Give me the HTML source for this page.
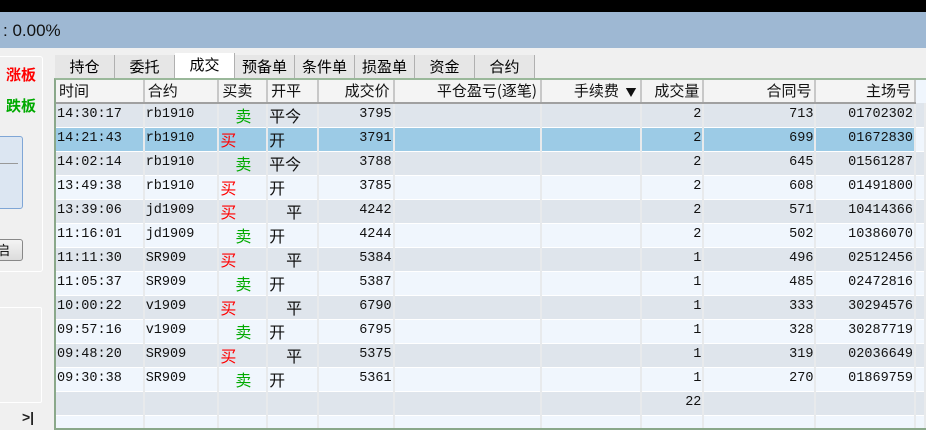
<!DOCTYPE html>
<html><head><meta charset="utf-8"><style>
*{margin:0;padding:0;box-sizing:border-box}
body{width:926px;height:430px;overflow:hidden;background:#f0f0f0;position:relative;font-family:"Liberation Sans","Noto Sans CJK SC",sans-serif}
.abs{position:absolute}
#top{left:0;top:0;width:926px;height:12px;background:#000}
#bar{left:0;top:12px;width:926px;height:36px;background:#9eb8d3;font-size:17px;line-height:38px;padding-left:3px;color:#111}
.tab{position:absolute;top:55px;height:23px;font-size:15px;line-height:24px;text-align:center;background:#e6e6e6;border-right:1px solid #b0b0b0;font-family:"Noto Sans CJK SC",sans-serif}
.tab.sel{background:#fff;top:53px;height:25px}
#grid{left:54px;top:78px;width:872px;height:352px;border-left:2px solid #8aa88a;border-top:2px solid #9ab89a;border-bottom:2px solid #8aa88a;background:#f0f6fd;overflow:hidden}
table{border-collapse:collapse;table-layout:fixed;position:absolute;left:0;top:0}
td{height:24px;line-height:22px;vertical-align:middle;border-right:2px solid #e8eaec;border-bottom:1px solid #fff;font-family:"Liberation Mono","Noto Sans CJK SC",monospace;font-size:13.5px;white-space:nowrap;overflow:hidden;padding:0 1px;color:#111}
th{height:23px;line-height:18px;font-weight:normal;font-size:15px;background:#f4f4f4;border-right:2px solid #c8c8c8;border-bottom:2px solid #a0a0a0;padding:0 3px;white-space:nowrap;color:#111;font-family:"Noto Sans CJK SC",sans-serif}
tr.o td{background:#dfe5ec}
tr.e td{background:#f0f6fd}
tr.s td{background:#9ccbe6}
.r{text-align:right}
.b{color:#f00;font-family:"Noto Sans CJK SC",sans-serif;font-size:16px}
.m{color:#0a0;font-family:"Noto Sans CJK SC",sans-serif;font-size:16px;padding-left:16px}
.k{font-family:"Noto Sans CJK SC",sans-serif;font-size:16px}
.k2{font-family:"Noto Sans CJK SC",sans-serif;font-size:16px;padding-left:18px}
</style></head><body>
<div id="top" class="abs"></div>
<div id="bar" class="abs">: 0.00%</div>
<div class="abs" style="left:-4px;top:56px;width:47px;height:216px;border:1px solid #fff;border-radius:3px"></div>
<div class="abs" style="left:6px;top:64px;font-size:15px;color:#f00;font-weight:bold;font-family:'Noto Sans CJK SC',sans-serif">涨板</div>
<div class="abs" style="left:6px;top:95px;font-size:15px;color:#0a0;font-weight:bold;font-family:'Noto Sans CJK SC',sans-serif">跌板</div>
<div class="abs" style="left:-4px;top:136px;width:27px;height:73px;border:1px solid #7fa6d6;border-radius:3px;background:#dce6f2"></div>
<div class="abs" style="left:0;top:163px;width:18px;height:1px;background:#999"></div>
<div class="abs" style="left:-4px;top:239px;width:27px;height:22px;border:1px solid #888;border-radius:3px;background:linear-gradient(#f4f4f4,#dcdcdc);font-size:13px;line-height:20px;font-family:'Noto Sans CJK SC',sans-serif">启</div>
<div class="abs" style="left:-4px;top:307px;width:46px;height:96px;border:1px solid #fff;border-radius:2px"></div>
<div class="abs" style="left:22px;top:409px;font-size:14px;font-weight:bold;color:#222">&gt;|</div>
<div class="tab" style="left:55px;width:60px">持仓</div>
<div class="tab" style="left:115px;width:60px">委托</div>
<div class="tab sel" style="left:175px;width:60px">成交</div>
<div class="tab" style="left:235px;width:60px">预备单</div>
<div class="tab" style="left:295px;width:60px">条件单</div>
<div class="tab" style="left:355px;width:60px">损盈单</div>
<div class="tab" style="left:415px;width:60px">资金</div>
<div class="tab" style="left:475px;width:60px">合约</div>
<div id="grid" class="abs">
<table>
<colgroup><col style="width:88px"><col style="width:75px"><col style="width:49px"><col style="width:51px"><col style="width:76px"><col style="width:148px"><col style="width:100px"><col style="width:63px"><col style="width:113px"><col style="width:100px"><col style="width:10px"></colgroup>
<tr><th style="text-align:left">时间</th><th style="text-align:left">合约</th><th style="text-align:left">买卖</th><th style="text-align:left">开平</th><th class="r">成交价</th><th class="r">平仓盈亏(逐笔)</th><th class="r">手续费 &nbsp;<span style="font-size:11px">▼</span></th><th class="r">成交量</th><th class="r">合同号</th><th class="r">主场号</th><th style="background:#f0f6fd;border:0"></th></tr>
<tr class="o"><td>14:30:17</td><td>rb1910</td><td class="m">卖</td><td class="k">平今</td><td class="r">3795</td><td></td><td></td><td class="r">2</td><td class="r">713</td><td class="r">01702302</td><td></td></tr>
<tr class="s"><td>14:21:43</td><td>rb1910</td><td class="b">买</td><td class="k">开</td><td class="r">3791</td><td></td><td></td><td class="r">2</td><td class="r">699</td><td class="r">01672830</td><td style="background:#f0f6fd"></td></tr>
<tr class="o"><td>14:02:14</td><td>rb1910</td><td class="m">卖</td><td class="k">平今</td><td class="r">3788</td><td></td><td></td><td class="r">2</td><td class="r">645</td><td class="r">01561287</td><td></td></tr>
<tr class="e"><td>13:49:38</td><td>rb1910</td><td class="b">买</td><td class="k">开</td><td class="r">3785</td><td></td><td></td><td class="r">2</td><td class="r">608</td><td class="r">01491800</td><td></td></tr>
<tr class="o"><td>13:39:06</td><td>jd1909</td><td class="b">买</td><td class="k2">平</td><td class="r">4242</td><td></td><td></td><td class="r">2</td><td class="r">571</td><td class="r">10414366</td><td></td></tr>
<tr class="e"><td>11:16:01</td><td>jd1909</td><td class="m">卖</td><td class="k">开</td><td class="r">4244</td><td></td><td></td><td class="r">2</td><td class="r">502</td><td class="r">10386070</td><td></td></tr>
<tr class="o"><td>11:11:30</td><td>SR909</td><td class="b">买</td><td class="k2">平</td><td class="r">5384</td><td></td><td></td><td class="r">1</td><td class="r">496</td><td class="r">02512456</td><td></td></tr>
<tr class="e"><td>11:05:37</td><td>SR909</td><td class="m">卖</td><td class="k">开</td><td class="r">5387</td><td></td><td></td><td class="r">1</td><td class="r">485</td><td class="r">02472816</td><td></td></tr>
<tr class="o"><td>10:00:22</td><td>v1909</td><td class="b">买</td><td class="k2">平</td><td class="r">6790</td><td></td><td></td><td class="r">1</td><td class="r">333</td><td class="r">30294576</td><td></td></tr>
<tr class="e"><td>09:57:16</td><td>v1909</td><td class="m">卖</td><td class="k">开</td><td class="r">6795</td><td></td><td></td><td class="r">1</td><td class="r">328</td><td class="r">30287719</td><td></td></tr>
<tr class="o"><td>09:48:20</td><td>SR909</td><td class="b">买</td><td class="k2">平</td><td class="r">5375</td><td></td><td></td><td class="r">1</td><td class="r">319</td><td class="r">02036649</td><td></td></tr>
<tr class="e"><td>09:30:38</td><td>SR909</td><td class="m">卖</td><td class="k">开</td><td class="r">5361</td><td></td><td></td><td class="r">1</td><td class="r">270</td><td class="r">01869759</td><td></td></tr>
<tr class="o"><td></td><td></td><td></td><td></td><td></td><td></td><td></td><td class="r">22</td><td></td><td></td><td></td></tr>
<tr class="e"><td></td><td></td><td></td><td></td><td></td><td></td><td></td><td></td><td></td><td></td><td></td></tr>
</table>
</div>
</body></html>
